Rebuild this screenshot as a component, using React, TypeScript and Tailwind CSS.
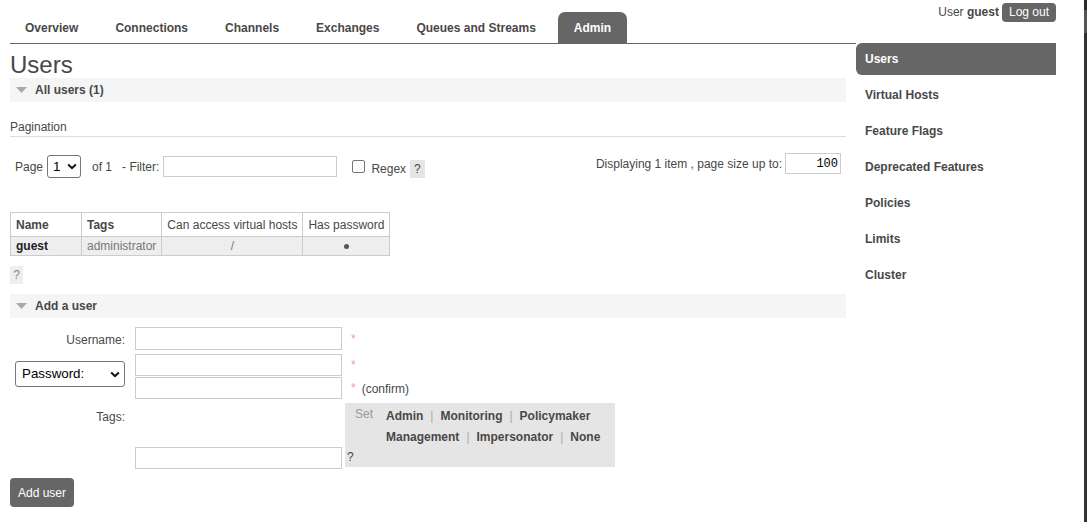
const tabs = ["Overview", "Connections", "Channels", "Exchanges", "Queues and Streams", "Admin"];
const side = ["Users", "Virtual Hosts", "Feature Flags", "Deprecated Features", "Policies", "Limits", "Cluster"];

function Chevron() {
  return (
    <svg width="10" height="7" viewBox="0 0 10 7">
      <path d="M1.2 1.5 L5 5.2 L8.8 1.5" stroke="#111" strokeWidth="2" fill="none" />
    </svg>
  );
}

function SectionHeader({ title }: { title: string }) {
  return (
    <div className="flex h-[24px] items-center bg-[#f5f5f5]">
      <svg className="ml-[6px]" width="11" height="6" viewBox="0 0 11 6">
        <path d="M0 0 H11 L5.5 6 Z" fill="#aaa" />
      </svg>
      <span className="ml-[8px] font-bold">{title}</span>
    </div>
  );
}

function Sep() {
  return <span className="mx-[7px] font-normal text-[#aaa]">|</span>;
}

function Star() {
  return <span className="text-[#f39c9c]">*</span>;
}

export default function App() {
  return (
    <div className="flex h-[522px] w-full overflow-hidden bg-white font-['Liberation_Sans',Arial,sans-serif] text-[12px] text-[#484848]">
      <div className="ml-[10px] w-[846px]">
        {/* top tabs */}
        <nav className="flex h-[44px] items-end gap-[7px] border-b border-[#666]">
          {tabs.map((t) => (
            <div
              key={t}
              className={`flex h-[31px] items-center px-[15px] font-bold ${
                t === "Admin" ? "rounded-t-[7px] bg-[#666] px-[16px] text-white" : ""
              }`}
            >
              {t}
            </div>
          ))}
        </nav>

        <main className="w-[836px]">
          <h1 className="mt-[7px] text-[24px] font-normal leading-[27px]">Users</h1>
          <SectionHeader title="All users (1)" />

          <div className="mt-[18px] border-b border-[#ddd] pb-[2px] leading-[14px]">Pagination</div>

          <div className="mt-[16px] flex items-start justify-between">
            <div className="mt-[2px] flex items-center pl-[5px]">
              <span className="mt-[1px]">Page</span>
              <div className="ml-[4px] flex h-[23px] w-[34px] items-center justify-between rounded-[3px] border border-[#767676] pl-[5px] pr-[3px] text-[13.33px] text-black">
                1 <Chevron />
              </div>
              <span className="ml-[11px]">of 1</span>
              <span className="ml-[10px]">- Filter:</span>
              <input className="ml-[4px] h-[21px] w-[174px] border border-[#ccc]" />
              <span className="ml-[15px] h-[13px] w-[13px] rounded-[2px] border border-[#767676]" />
              <span className="ml-[6px] mt-[5px]">Regex</span>
              <span className="ml-[4px] mt-[4px] bg-[#e5e5e5] px-[4px] leading-[18px]">?</span>
            </div>
            <div className="flex items-center pr-[5px]">
              <span>Displaying 1 item , page size up to:</span>
              <input
                defaultValue="100"
                className="ml-[3px] h-[21px] w-[56px] border border-[#ccc] pr-[2px] text-right font-['Liberation_Mono',monospace] text-[12px] text-black"
              />
            </div>
          </div>

          <table className="mt-[34px] border-collapse">
            <thead>
              <tr className="h-[24px]">
                <th className="w-[71px] border border-[#ccc] px-[5px] text-left font-bold">Name</th>
                <th className="border border-[#ccc] px-[5px] text-left font-bold">Tags</th>
                <th className="border border-[#ccc] px-[5px] text-left font-normal">Can access virtual hosts</th>
                <th className="border border-[#ccc] px-[5px] text-left font-normal">Has password</th>
              </tr>
            </thead>
            <tbody>
              <tr className="h-[19px] bg-[#eee]">
                <td className="border border-[#ccc] px-[5px] font-bold text-[#222]">guest</td>
                <td className="border border-[#ccc] px-[5px] text-[#777]">administrator</td>
                <td className="border border-[#ccc] px-[5px] text-center text-[#777]">/</td>
                <td className="border border-[#ccc] px-[5px]">
                  <div className="mx-auto h-[5px] w-[5px] rounded-full bg-[#555]" />
                </td>
              </tr>
            </tbody>
          </table>

          <div className="mt-[10px] h-[18px] w-[13px] bg-[#eee] text-center leading-[18px] text-[#888]">?</div>

          <div className="mt-[10px]">
            <SectionHeader title="Add a user" />
          </div>

          {/* add user form */}
          <div className="mt-[9px] flex items-center">
            <label className="w-[115px] pt-[3px] text-right">Username:</label>
            <input className="ml-[10px] h-[23px] w-[207px] border border-[#ccc]" />
            <span className="ml-[9px]">
              <Star />
            </span>
          </div>

          <div className="mt-[4px] flex items-start">
            <div className="mt-[7px] flex w-[115px] justify-end">
              <div className="flex h-[26px] w-[110px] items-center justify-between rounded-[3px] border border-[#767676] pl-[6px] pr-[4px] text-[13.33px] text-black">
                Password:
                <Chevron />
              </div>
            </div>
            <div className="ml-[10px] flex flex-col gap-[1px]">
              <div className="flex items-center">
                <input className="h-[22px] w-[207px] border border-[#ccc]" />
                <span className="ml-[9px]">
                  <Star />
                </span>
              </div>
              <div className="flex items-center">
                <input className="h-[22px] w-[207px] border border-[#ccc]" />
                <span className="ml-[9px]">
                  <Star />
                </span>
                <span className="ml-[6px] pt-[2px]">(confirm)</span>
              </div>
            </div>
          </div>

          <div className="mt-[4px] flex items-start">
            <label className="w-[115px] pt-[7px] text-right leading-[14px]">Tags:</label>
            <input className="ml-[10px] mt-[44px] h-[22px] w-[207px] border border-[#ccc]" />
            <div className="ml-[3px] h-[64px] w-[270px] bg-[#e5e5e5]">
              <div className="flex pl-[10px] pt-[3px]">
                <span className="leading-[17px] text-[#999]">Set</span>
                <div className="ml-[13px] font-bold leading-[21px]">
                  <div>
                    Admin
                    <Sep />
                    Monitoring
                    <Sep />
                    Policymaker
                  </div>
                  <div>
                    Management
                    <Sep />
                    Impersonator
                    <Sep />
                    None
                  </div>
                </div>
              </div>
              <div className="pl-[2px] leading-[19px]">?</div>
            </div>
          </div>

          <button className="mt-[9px] h-[29px] rounded-[4px] bg-[#666] px-[8px] text-white">Add user</button>
        </main>
      </div>

      {/* right column */}
      <aside className="w-[200px]">
        <div className="flex h-[43px] items-start justify-end pt-[3px]">
          <span className="leading-[19px]">
            User <b>guest</b>
          </span>
          <button className="ml-[3px] h-[19px] rounded-[4px] bg-[#666] px-[7px] leading-[19px] text-white">
            Log out
          </button>
        </div>
        <ul>
          {side.map((s) => (
            <li
              key={s}
              className={`mb-[4px] flex h-[32px] items-center pl-[9px] font-bold ${
                s === "Users" ? "rounded-l-[6px] bg-[#666] text-white" : ""
              }`}
            >
              {s}
            </li>
          ))}
        </ul>
      </aside>

      <div className="flex-1" />
      <div className="flex w-[3px] flex-col bg-[#333]">
        <div className="h-[10px] bg-[#2a2a2a]" />
        <div className="h-[23px] bg-[#555]" />
      </div>
    </div>
  );
}
